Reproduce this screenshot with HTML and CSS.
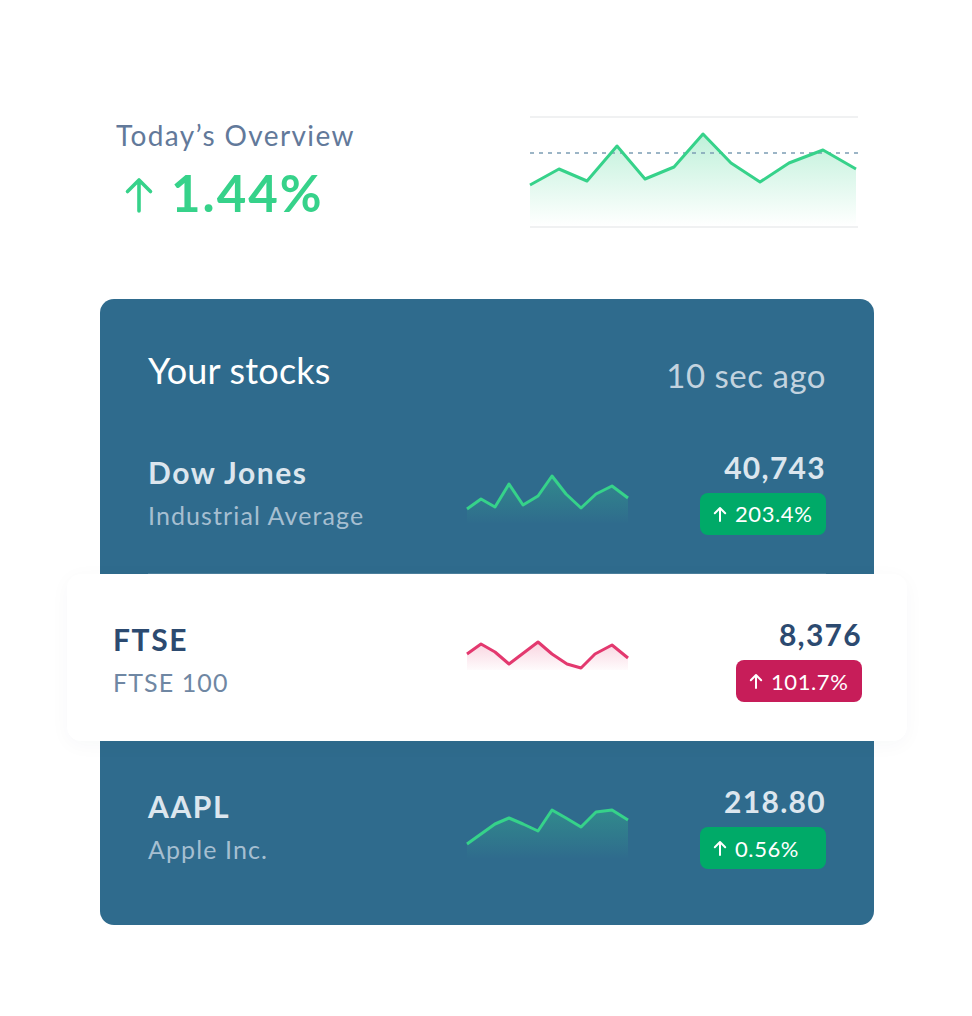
FILE: index.html
```html
<!DOCTYPE html>
<html lang="en">
<head>
    <meta charset="UTF-8">
    <meta name="viewport" content="width=device-width, initial-scale=1.0">
    <title>Stocks overview</title>
    <link rel="stylesheet" href="styles.css">
</head>
<body>
    <main class="wrap">
        <section class="overview">
            <div class="overview-text">
                <p class="overview-title">Today’s Overview</p>
                <p class="overview-change">
                    <svg class="big-arrow" viewBox="0 0 30 36"><path d="M15 34V3M3.5 14.5L15 3l11.5 11.5"/></svg>
                    <span>1.44%</span>
                </p>
            </div>
            <svg class="overview-chart" viewBox="0 0 328 112">
                <defs>
                    <linearGradient id="ovFill" x1="0" y1="0" x2="0" y2="1">
                        <stop offset="0" stop-color="#36d28a" stop-opacity="0.32"/>
                        <stop offset="1" stop-color="#36d28a" stop-opacity="0"/>
                    </linearGradient>
                </defs>
                <line class="grid-line" x1="0" y1="1" x2="328" y2="1"/>
                <line class="grid-line" x1="0" y1="111" x2="328" y2="111"/>
                <polygon fill="url(#ovFill)" points="0,69 29,53 57,65 87,30 115,63 144,51 173,18 201,47 230,66 259,47 293,34 326,53 326,110 0,110"/>
                <line class="avg-line" x1="0" y1="37" x2="328" y2="37"/>
                <polyline class="ov-line" points="0,69 29,53 57,65 87,30 115,63 144,51 173,18 201,47 230,66 259,47 293,34 326,53"/>
            </svg>
        </section>

        <section class="stocks">
            <header class="stocks-head">
                <h2 class="stocks-title">Your stocks</h2>
                <span class="stocks-time">10 sec ago</span>
            </header>

            <ul class="stock-list">
                <li class="stock">
                    <div class="stock-name">
                        <h3>Dow Jones</h3>
                        <p>Industrial Average</p>
                    </div>
                    <svg class="spark" viewBox="0 0 162 70">
                        <defs>
                            <linearGradient id="upFill" x1="0" y1="0" x2="0" y2="1">
                                <stop offset="0" stop-color="#36d28a" stop-opacity="0.3"/>
                                <stop offset="1" stop-color="#36d28a" stop-opacity="0"/>
                            </linearGradient>
                            <linearGradient id="downFill" x1="0" y1="0" x2="0" y2="1">
                                <stop offset="0" stop-color="#e3396f" stop-opacity="0.22"/>
                                <stop offset="1" stop-color="#e3396f" stop-opacity="0.02"/>
                            </linearGradient>
                        </defs>
                        <polygon fill="url(#upFill)" points="1,52 15,42 29,50 43,27 57,48 72,39 86,19 100,37 115,51 130,37 146,29 162,41 162,67 1,67"/>
                        <polyline class="spark-up" points="1,52 15,42 29,50 43,27 57,48 72,39 86,19 100,37 115,51 130,37 146,29 162,41"/>
                    </svg>
                    <div class="stock-value">
                        <div class="price">40,743</div>
                        <span class="badge badge-up">
                            <svg class="small-arrow" viewBox="0 0 14 16"><path d="M7 15V2M1.8 7.2L7 2l5.2 5.2"/></svg>203.4%
                        </span>
                    </div>
                </li>

                <li class="stock stock-active">
                    <div class="stock-name">
                        <h3>FTSE</h3>
                        <p>FTSE 100</p>
                    </div>
                    <svg class="spark" viewBox="0 0 162 70">
                        <polygon fill="url(#downFill)" points="1,30 15,20 29,28 43,40 72,18 86,30 101,40 115,44 129,30 146,21 162,34 162,46 1,46"/>
                        <polyline class="spark-down" points="1,30 15,20 29,28 43,40 72,18 86,30 101,40 115,44 129,30 146,21 162,34"/>
                    </svg>
                    <div class="stock-value">
                        <div class="price">8,376</div>
                        <span class="badge badge-down">
                            <svg class="small-arrow" viewBox="0 0 14 16"><path d="M7 15V2M1.8 7.2L7 2l5.2 5.2"/></svg>101.7%
                        </span>
                    </div>
                </li>

                <li class="stock">
                    <div class="stock-name">
                        <h3>AAPL</h3>
                        <p>Apple Inc.</p>
                    </div>
                    <svg class="spark" viewBox="0 0 162 70">
                        <polygon fill="url(#upFill)" points="1,53 29,33 43,27 57,33 72,40 86,19 100,27 115,36 130,21 146,19 162,29 162,68 1,68"/>
                        <polyline class="spark-up" points="1,53 29,33 43,27 57,33 72,40 86,19 100,27 115,36 130,21 146,19 162,29"/>
                    </svg>
                    <div class="stock-value">
                        <div class="price">218.80</div>
                        <span class="badge badge-up">
                            <svg class="small-arrow" viewBox="0 0 14 16"><path d="M7 15V2M1.8 7.2L7 2l5.2 5.2"/></svg>0.56%
                        </span>
                    </div>
                </li>
            </ul>
        </section>
    </main>
</body>
</html>
```

FILE: styles.css
```css
* {
    margin: 0;
    padding: 0;
    box-sizing: border-box;
}

:root {
    --green: #36d28a;
    --card-bg: #2f6b8d;
    --badge-up: #00aa68;
    --badge-down: #c71d59;
    --navy: #2c4a70;
    --slate: #62799a;
}

body {
    font-family: "Lato", "Noto Sans", sans-serif;
    background: #fff;
    color: var(--navy);
}

.wrap {
    width: 774px;
    margin-left: 100px;
    padding-top: 116px;
}

/* 今日概览 */
.overview {
    display: flex;
    justify-content: space-between;
    align-items: flex-start;
    padding: 0 16px;
    margin-bottom: 71px;
}

.overview-title {
    font-size: 28px;
    line-height: 1.2;
    letter-spacing: 1.4px;
    color: var(--slate);
    padding-top: 3px;
}

.overview-change {
    display: flex;
    align-items: center;
    gap: 17px;
    margin-top: 9px;
    padding-left: 8px;
    font-size: 51px;
    line-height: 1.2;
    font-weight: 700;
    letter-spacing: 2px;
    color: var(--green);
}

.big-arrow {
    width: 30px;
    height: 36px;
    margin-top: 6px;
    fill: none;
    stroke: var(--green);
    stroke-width: 3.6;
    stroke-linecap: round;
    stroke-linejoin: round;
}

.overview-chart {
    width: 328px;
    height: 112px;
    overflow: visible;
}

.grid-line {
    stroke: #f0f1f2;
    stroke-width: 2;
}

.avg-line {
    stroke: #7c9db4;
    stroke-width: 1.6;
    stroke-dasharray: 4 5;
}

.ov-line {
    fill: none;
    stroke: var(--green);
    stroke-width: 3;
    stroke-linejoin: round;
}

/* 股票卡片 */
.stocks {
    background: var(--card-bg);
    border-radius: 14px;
    padding: 50px 48px 17px;
}

.stocks-head {
    display: flex;
    justify-content: space-between;
    align-items: flex-end;
    margin-bottom: 15px;
}

.stocks-title {
    font-size: 36px;
    line-height: 1.2;
    font-weight: 400;
    letter-spacing: 0.2px;
    color: #fff;
}

.stocks-time {
    font-size: 33px;
    line-height: 1.2;
    letter-spacing: 0.5px;
    color: #c3d3df;
    position: relative;
    top: 3px;
}

.stock-list {
    list-style: none;
}

.stock {
    display: grid;
    grid-template-columns: 318px 162px 1fr;
    align-items: center;
    height: 167px;
    padding-top: 3px;
}

.stock:first-child {
    border-bottom: 1px solid rgba(255, 255, 255, 0.14);
}

.stock-name h3 {
    font-size: 30px;
    line-height: 1.2;
    font-weight: 700;
    letter-spacing: 1.6px;
    color: #dce6ee;
    margin-bottom: 10px;
}

.stock-name p {
    font-size: 25px;
    line-height: 1.2;
    letter-spacing: 1.1px;
    color: #a6bfd1;
}

.spark {
    width: 162px;
    height: 70px;
    overflow: visible;
}

.spark-up,
.spark-down {
    fill: none;
    stroke-width: 3;
    stroke-linejoin: round;
}

.spark-up {
    stroke: var(--green);
}

.spark-down {
    stroke: #e3396f;
}

.stock-value {
    text-align: right;
}

.price {
    font-size: 30px;
    line-height: 1.2;
    font-weight: 700;
    letter-spacing: 1.3px;
    color: #dce6ee;
    margin-bottom: 8px;
}

.badge {
    display: inline-flex;
    align-items: center;
    gap: 8px;
    width: 126px;
    height: 42px;
    padding-left: 13px;
    border-radius: 8px;
    font-size: 22px;
    letter-spacing: 0.6px;
    color: #fff;
    text-align: left;
}

.badge-up {
    background: var(--badge-up);
}

.badge-down {
    background: var(--badge-down);
}

.small-arrow {
    width: 14px;
    height: 16px;
    fill: none;
    stroke: #fff;
    stroke-width: 2;
    stroke-linecap: round;
    stroke-linejoin: round;
}

/* 高亮行 */
.stock-active {
    position: relative;
    z-index: 1;
    grid-template-columns: 353px 162px 1fr;
    margin: 0 -81px;
    padding: 3px 45px 0 46px;
    background: #fff;
    border-radius: 14px;
    box-shadow: 0 4px 20px rgba(30, 60, 90, 0.035);
}

.stock-active .stock-name h3,
.stock-active .price {
    color: var(--navy);
}

.stock-active .stock-name p {
    color: #6f87a3;
}
```
